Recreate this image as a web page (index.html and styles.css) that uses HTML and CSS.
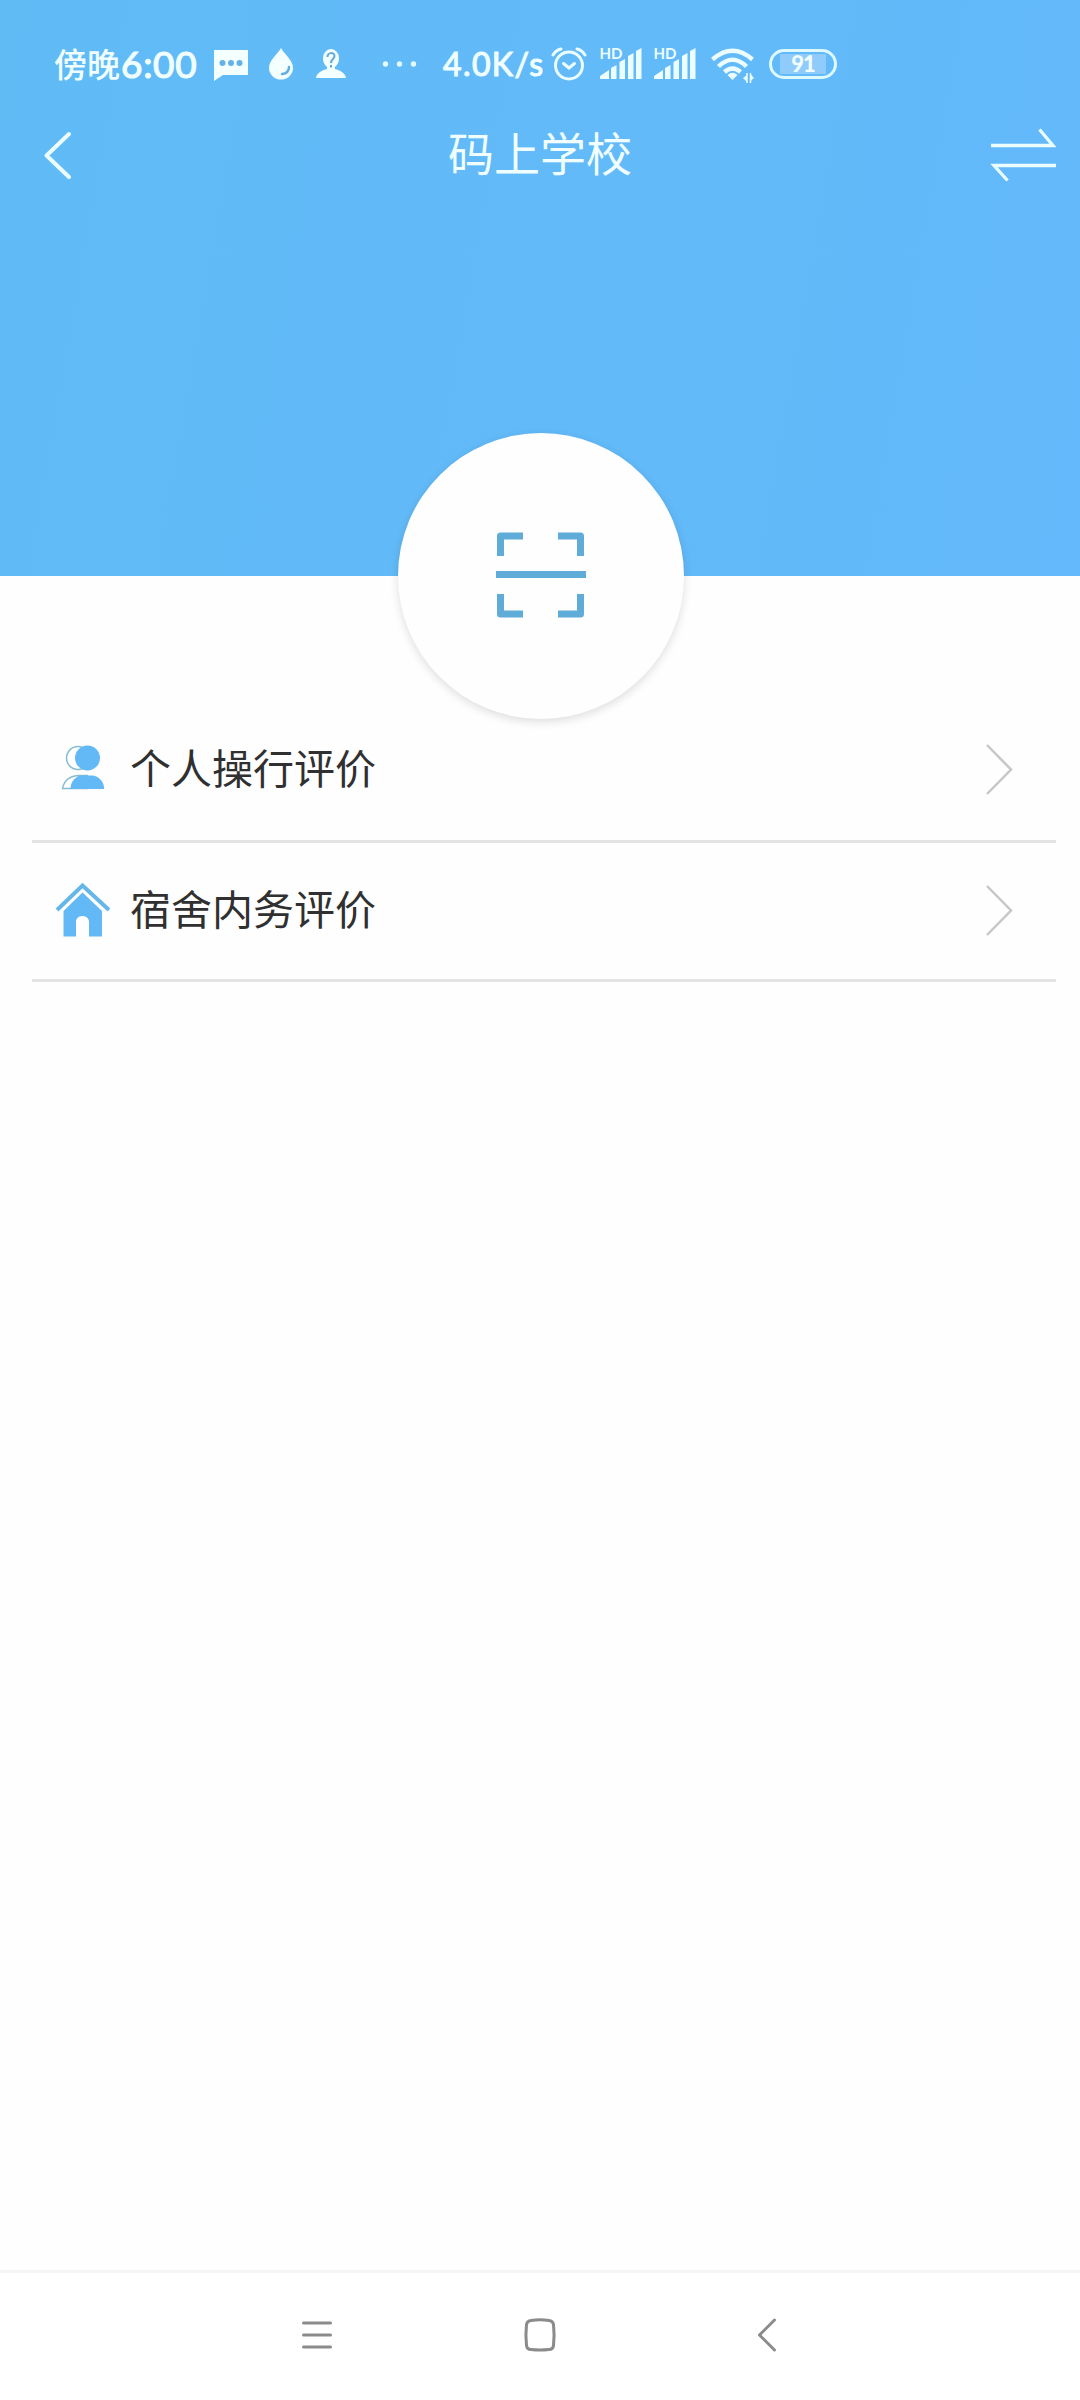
FILE: index.html
```html
<!DOCTYPE html>
<html lang="zh-CN">
<head>
<meta charset="utf-8">
<title>码上学校</title>
<link rel="stylesheet" href="styles.css">
</head>
<body>
<div class="screen">
  <header class="hero">
    <div class="status">
      <span class="period">傍晚</span><span class="clock">6:00</span>
      <svg class="chat" width="34" height="32" viewBox="0 0 34 32"><path fill="#f4ffff" d="M0 1h34v25H9l-9 6z"/><g fill="#62b2e8"><circle cx="8.500" cy="14" r="3"/><circle cx="17" cy="14" r="3"/><circle cx="25.500" cy="14" r="3"/></g></svg>
      <svg class="drop" width="24" height="32" viewBox="0 0 24 32"><path fill="#f4ffff" d="M12 0C15 6 24 12 24 20a12 11.500 0 0 1-24 0C0 12 9 6 12 0z"/><path fill="none" stroke="#62aee0" stroke-width="2.500" stroke-linecap="round" d="M20 19c0 4-2.500 6.500-7 7"/></svg>
      <svg class="person" width="30" height="30" viewBox="0 0 30 30"><path fill="#f4ffff" d="M15 0a8.500 9 0 0 1 8 9.500c0 3.500-1.500 6.500-4 8.500v2c5 1.500 10 3.500 11 9H0c1-5.500 6-7.500 11-9v-2c-2.500-2-4-5-4-8.500A8.500 9 0 0 1 15 0z"/><path fill="none" stroke="#62a9d8" stroke-width="2" d="M11.500 8c0-5 7-5 7-1 0 3-3.500 3-3.500 7M15 16v2.500"/></svg>
      <svg class="dots" width="34" height="8" viewBox="0 0 34 8" fill="#e4fbff"><circle cx="3.500" cy="4" r="2.700"/><circle cx="17.500" cy="4" r="2.700"/><circle cx="31.500" cy="4" r="2.700"/></svg>
      <span class="speed">4.0K/s</span>
      <svg class="alarm" width="36" height="34" viewBox="0 0 36 34" fill="none" stroke="#ecfdff" stroke-width="3" stroke-linecap="round"><circle cx="18" cy="18.500" r="13.500"/><path d="M2 8Q5 3 10 2M34 8Q31 3 26 2M12.500 16.500l5.500 4.500 5.500-4.500"/></svg>
      <svg class="signal" width="42" height="32" viewBox="0 0 42 32"><text class="hd" x="-.5" y="11" textLength="23">HD</text><path fill="#ecfdff" d="M0 31v-3l9-6v9zM11 20l5.500-3v14H11zM19.500 14l5.500-3v20h-5.500zM28 8l5.500-3v26H28zM36 3l5.500-3v31H36z"/></svg>
      <svg class="signal second" width="42" height="32" viewBox="0 0 42 32"><text class="hd" x="-.5" y="11" textLength="23">HD</text><path fill="#ecfdff" d="M0 31v-3l9-6v9zM11 20l5.500-3v14H11zM19.500 14l5.500-3v20h-5.500zM28 8l5.500-3v26H28zM36 3l5.500-3v31H36z"/></svg>
      <svg class="wifi" width="43" height="35" viewBox="0 0 43 35" fill="none" stroke="#ecfdff" stroke-width="4.500"><path d="M1.500 11.500Q21.500-6 41.500 11.500M7.500 18.500Q21.500 5 35.500 18.500M13.500 24Q21.500 17 29.500 24"/><path fill="#ecfdff" stroke="none" d="M16.500 27q5-4.500 10 0l-5 5zM32 30l4-3v7zM43 30l-3.500 3v-7z"/><path stroke-width="1.500" d="M36 25v10M39.500 25v10"/></svg>
      <div class="battery"><span class="level">91</span></div>
    </div>
    <nav class="titlebar">
      <svg width="30" height="50" viewBox="0 0 30 50" fill="none" stroke="#ecfdff" stroke-width="4" stroke-linecap="round" stroke-linejoin="round"><path d="M25 4L2.500 25.500 25 47"/></svg>
      <h1 class="title">码上学校</h1>
      <svg class="swap" width="66" height="54" viewBox="0 0 66 54" fill="none" stroke="#ecfdff" stroke-width="3.300"><path d="M1 17.500h62L49.500 1.500M66 37.500H4l13.500 15"/></svg>
    </nav>
    <div class="scan">
      <svg class="frame" width="90" height="86" viewBox="0 0 90 86" fill="none" stroke="#5facd9" stroke-width="7" stroke-linejoin="round"><path d="M4.500 24V4H27M62 4h22.500v20M4.500 62v20H27M62 82h22.500V62"/><path d="M0 42.500h90"/></svg>
    </div>
  </header>
  <main class="list">
    <a class="row">
      <svg class="icon" width="54" height="56" viewBox="0 0 54 56"><g fill="#fff" stroke="#87bdcd" stroke-width="1.500"><circle cx="22" cy="17" r="11.500"/><path d="M6.500 47.500c1.500-9 9-13 17-13h8v13z"/></g><g fill="#62b9f5"><circle cx="31.500" cy="17" r="12.500"/><path d="M14.500 48c0-7 4-11 9-13.500h13c7 1 12 7 11.500 13.500z"/></g></svg>
      <span class="label">个人操行评价</span>
      <svg width="30" height="54" viewBox="0 0 30 54" fill="none" stroke="#c7c7c7" stroke-width="2.500"><path d="M3 3l24 24.500L3 52"/></svg>
    </a>
    <a class="row">
      <svg class="icon" width="54" height="56" viewBox="0 0 54 56"><path fill="none" stroke="#65b7e9" stroke-width="4" d="M1 28L26.500 3.500 53 28"/><path fill="#62b9f5" d="M7.500 29L26.500 10.500 46 29v25.500H33V40c0-8-13-8-13 0v14.500H7.500z"/></svg>
      <span class="label">宿舍内务评价</span>
      <svg width="30" height="54" viewBox="0 0 30 54" fill="none" stroke="#c7c7c7" stroke-width="2.500"><path d="M3 3l24 24.500L3 52"/></svg>
    </a>
  </main>
  <footer class="keys">
    <svg width="32" height="34" viewBox="0 0 32 34" fill="none" stroke="#8b8b8b" stroke-width="3" stroke-linecap="round"><path d="M2.500 5h27M2.500 17h27M2.500 29h27"/></svg>
    <svg class="home" width="32" height="34" viewBox="0 0 32 34" fill="none" stroke="#8b8b8b" stroke-width="3"><path d="M7 2.500q9-1.500 18 0 4 .5 4.500 4 1.200 10.500 0 21-.5 4-4.500 4-9 1-18 0-4 0-4.500-4-1.200-10.500 0-21 .5-3.500 4.500-4z"/></svg>
    <svg class="back" width="20" height="34" viewBox="0 0 20 34" fill="none" stroke="#8b8b8b" stroke-width="3" stroke-linecap="round" stroke-linejoin="round"><path d="M17.500 2L2.500 17l15 15"/></svg>
  </footer>
</div>
</body>
</html>
```
FILE: styles.css
```css
* { box-sizing: border-box; }
body { margin: 0; background: #fefefe; font-family: "Noto Sans CJK SC", sans-serif; }
svg { display: block; flex: none; overflow: visible; }
.screen { width: 1080px; height: 2400px; display: flex; flex-direction: column; }
.hero {
  height: 576px; position: relative; color: #f0feff;
  background: linear-gradient(100deg, #60bbf5, #62baf8 55%, #63b9fb);
}
.status { height: 110px; padding: 18px 0 0 54px; display: flex; align-items: center; white-space: nowrap; }
.period { width: 67px; margin-bottom: 3px; font-size: 33px; font-weight: 500; line-height: 48px; }
.clock { width: 76px; margin-right: 17px; font: 400 37px/44px Lato, sans-serif; letter-spacing: .7px; -webkit-text-stroke: 1.2px #f0feff; }
.chat { margin-top: 2px; }
.drop { margin-left: 21px; }
.person { margin-left: 23px; }
.dots { margin-left: 36px; }
.speed { width: 101px; margin-left: 27px; font: 400 32px/44px Lato, sans-serif; letter-spacing: 1.4px; -webkit-text-stroke: 1.1px #f0feff; }
.alarm { margin-left: 7px; }
.signal { margin-left: 13px; }
.signal.second { margin-left: 12px; }
.hd { font: 700 15px Lato, sans-serif; fill: #ecfdff; }
.wifi { margin: 3px 0 0 15px; }
.battery {
  width: 68px; height: 30px; margin-left: 15px; padding: 3px 8px;
  border: 3px solid #dffaff; border-radius: 15px; display: flex;
}
.level { flex: 1; margin: -1px 0; background: #8fccfb; text-align: center; font: 900 22px/20px Lato, sans-serif; letter-spacing: -1px; }
.titlebar { height: 90px; padding: 0 24px 0 44px; display: flex; align-items: center; justify-content: space-between; }
.title { margin: 0 0 8px 16px; font-size: 46px; font-weight: 400; line-height: 60px; }
.scan {
  position: absolute; left: 398px; top: 433px; width: 286px; height: 286px; border-radius: 50%;
  background: #fefefe; box-shadow: 0 3px 10px rgba(0,0,0,.13);
  display: flex; align-items: center; justify-content: center;
}
.frame { margin-bottom: 3px; }
.list { flex: 1; padding: 122px 24px 0 32px; }
.row { height: 145px; padding: 0 42px 0 24px; display: flex; align-items: center; border-bottom: 3px solid #e3e3e3; color: #303030; }
.row + .row { height: 139px; padding-bottom: 2px; }
.label { flex: 1; margin: 0 0 7px 20px; font-size: 41px; line-height: 60px; }
.keys { height: 130px; border-top: 3px solid #f5f5f5; padding: 0 303px 3px 301px; display: flex; align-items: center; justify-content: space-between; background: #fff; }
.home { margin-right: 10px; }
```
